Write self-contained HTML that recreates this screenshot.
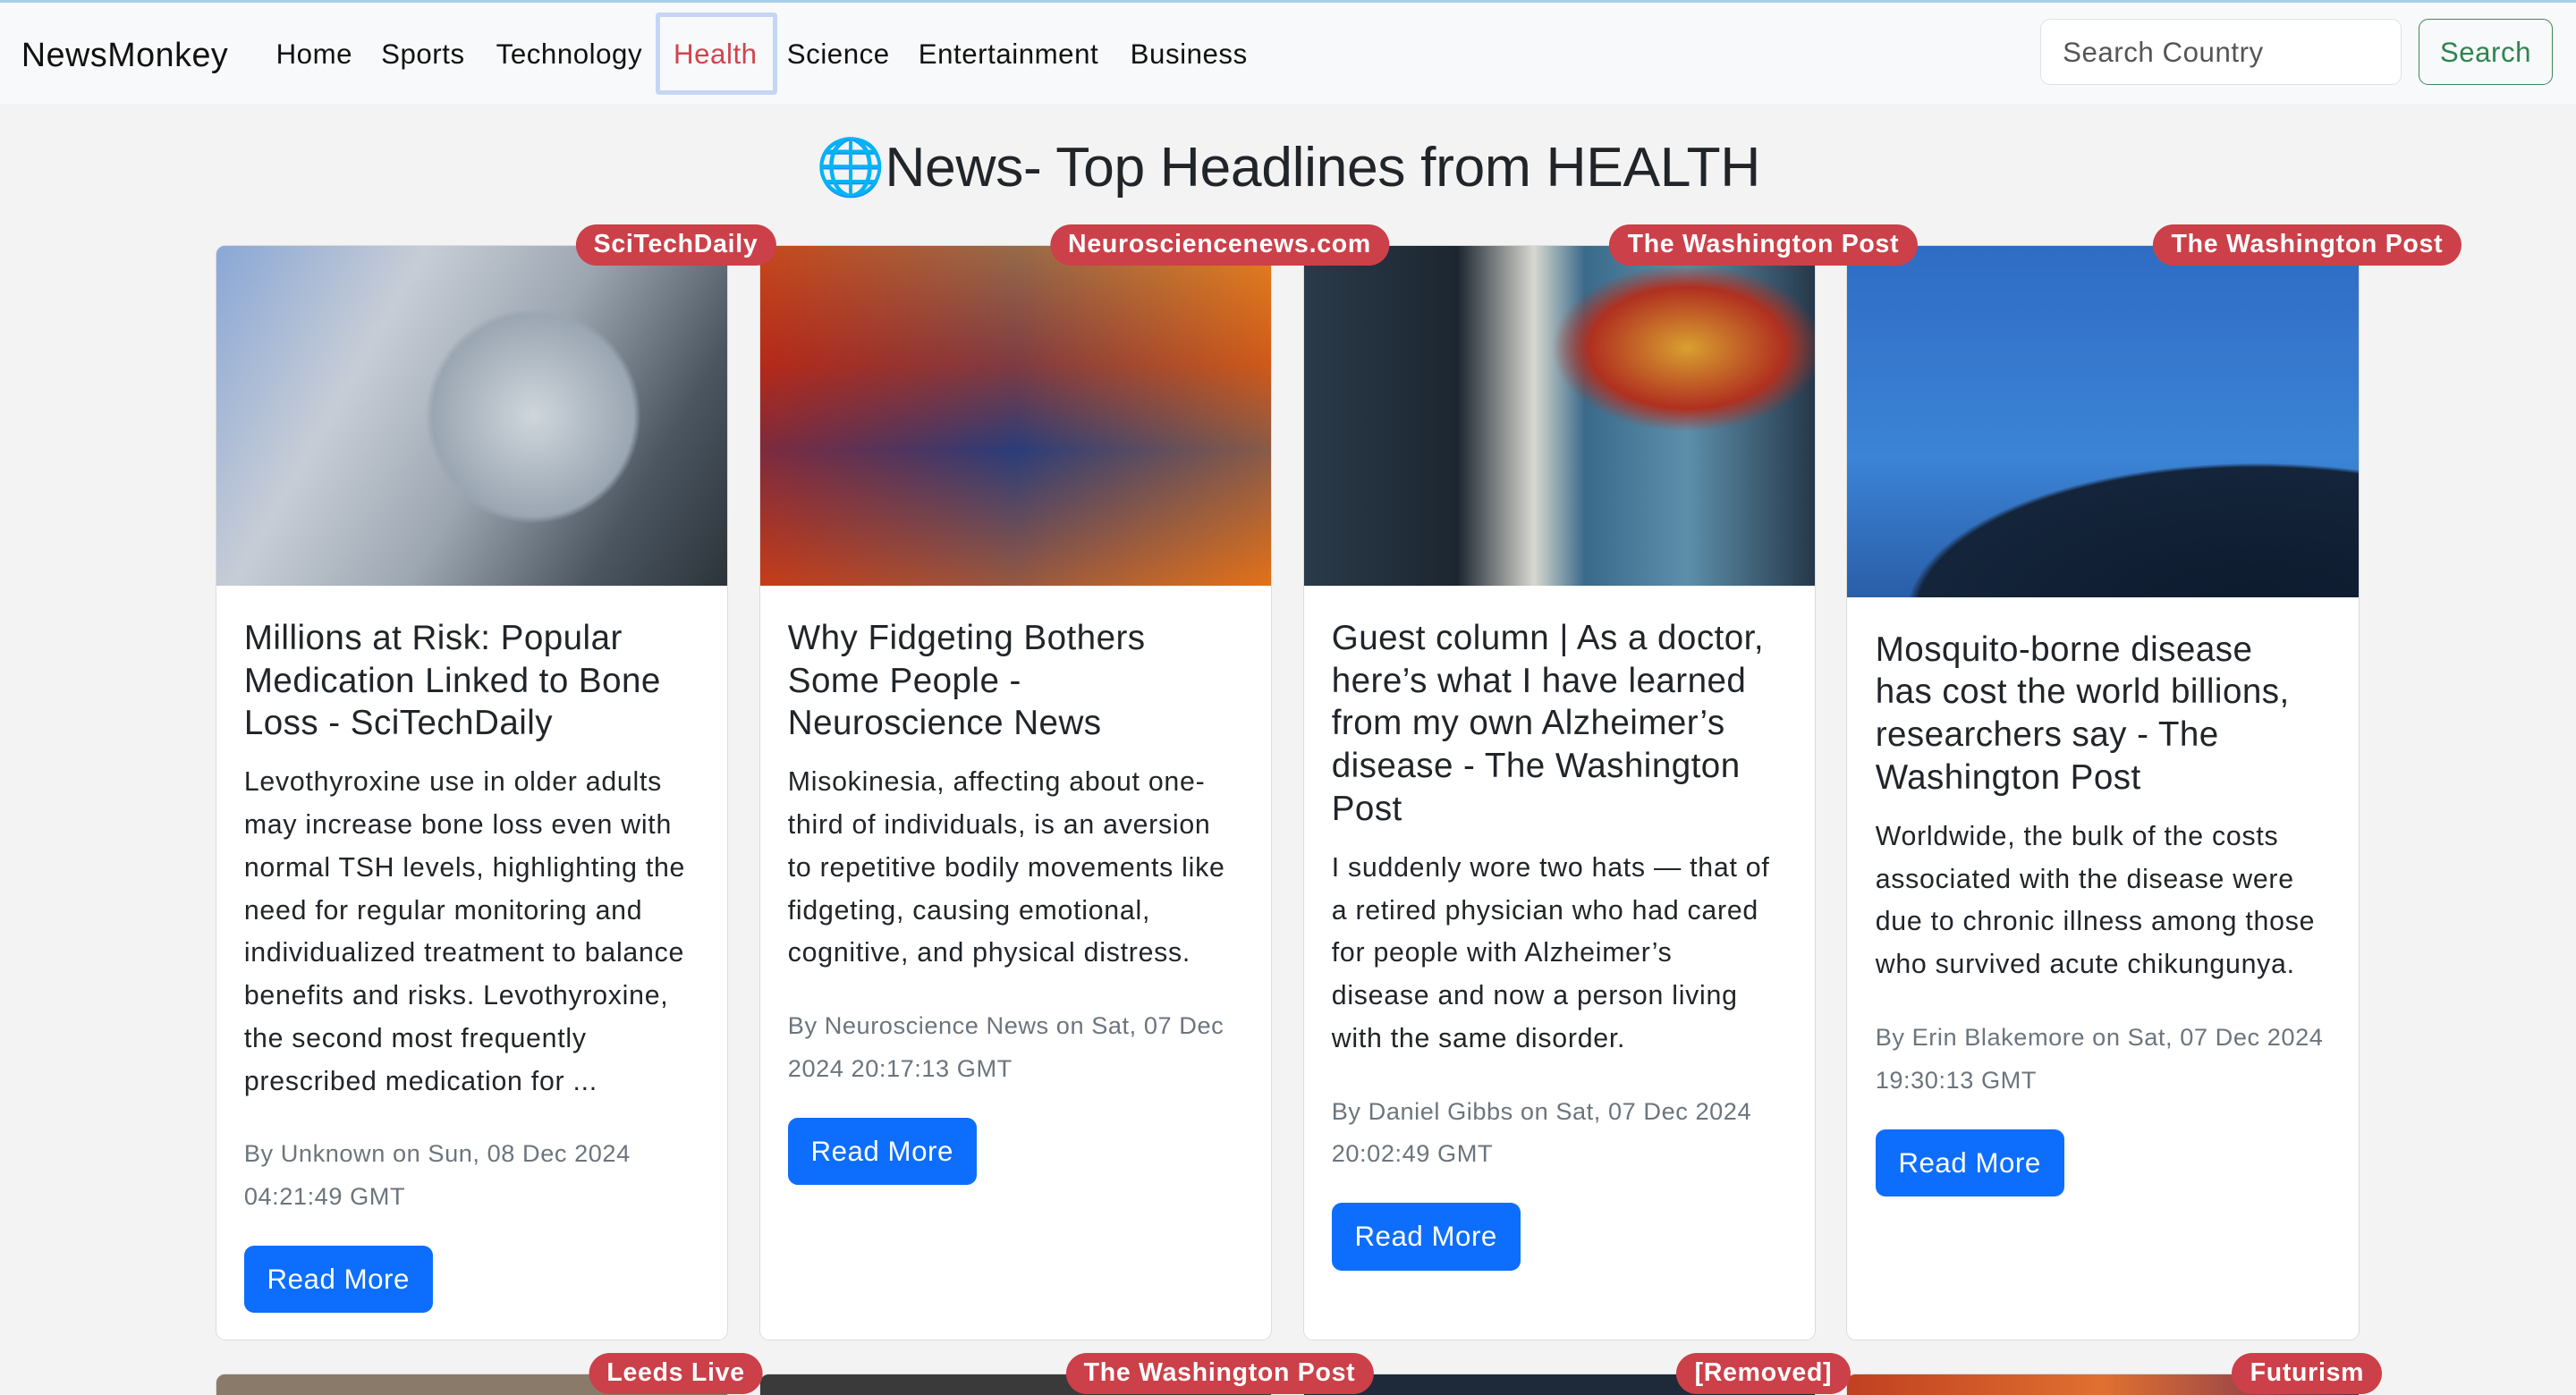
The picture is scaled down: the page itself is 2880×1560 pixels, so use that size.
<!DOCTYPE html>
<html><head><meta charset="utf-8">
<style>
html,body{margin:0;padding:0;}
html{background:#f3f3f3;overflow:hidden;width:2880px;height:1560px}
body{zoom:1.83673;width:1568px;height:849px;overflow:hidden;position:relative;font-family:"Liberation Sans",Helvetica,Arial,sans-serif;color:#212529;background:#f3f3f3}
.nav{position:absolute;left:0;top:0;width:1568px;height:63px;background:#f8f9fa;border-top:2px solid #a8cfe6;box-sizing:border-box}
.brand{position:absolute;left:13px;top:20px;font-size:20.5px;color:#111;letter-spacing:.3px}
.links{position:absolute;left:168px;top:22px;font-size:17px;color:#111;letter-spacing:.3px}
.links span{position:absolute;white-space:nowrap}
.hl{position:absolute;left:399px;top:6px;width:74px;height:50px;border:3px solid #c5d6f5;box-sizing:border-box;border-radius:2px}
.inp{position:absolute;left:1242px;top:10px;width:220px;height:40px;background:#fff;border:1px solid #dee2e6;border-radius:6px;box-sizing:border-box;font-size:17px;color:#555;padding:10px 13px;letter-spacing:.3px}
.btn{position:absolute;left:1472px;top:10px;width:82px;height:40px;border:1px solid #3a8a57;border-radius:6px;box-sizing:border-box;font-size:17px;color:#2f8450;text-align:center;line-height:40px;letter-spacing:.3px}
h1{position:absolute;left:0;width:1568px;text-align:center;top:82px;margin:0;font-size:34px;font-weight:500;color:#212529;line-height:40px;letter-spacing:-.2px}
.card{position:absolute;top:149px;width:312px;height:667px;background:#fff;border:1px solid #dcdcdc;border-radius:6px;box-sizing:border-box}
.img{height:207px;border-radius:5px 5px 0 0;overflow:hidden}
.badge{position:absolute;top:-13px;transform:translateX(-50%);background:#cc4049;color:#fff;font-weight:bold;font-size:15.5px;border-radius:14px;padding:4px 11px;white-space:nowrap;line-height:17px;z-index:3;letter-spacing:.4px}
.cb{padding:19px 24px 18px 17px}
.t{font-size:21px;line-height:26px;font-weight:500;margin:0 0 10px;color:#212529;letter-spacing:.25px}
.p{font-size:16.5px;line-height:26px;margin:0 0 18px;color:#212529;letter-spacing:.4px}
.m{font-size:14.8px;line-height:26px;color:#6c757d;margin:0 -8px 17px 0;letter-spacing:.3px}
.rb{display:inline-block;background:#0d6efd;color:#fff;font-size:17px;padding:0 14px;height:41px;line-height:41px;border-radius:6px;letter-spacing:.3px}
</style></head><body>
<div class="nav">
<div class="brand">NewsMonkey</div>
<div class="links">
<span style="left:0">Home</span><span style="left:64px">Sports</span><span style="left:134px">Technology</span><span style="left:242px;color:#d1434d">Health</span><span style="left:311px">Science</span><span style="left:391px">Entertainment</span><span style="left:520px">Business</span>
</div>
<div class="hl"></div>
<div class="inp">Search Country</div>
<div class="btn">Search</div>
</div>
<h1><span style="color:#4a8fd4">&#127760;</span>News- Top Headlines from HEALTH</h1>

<div class="card" style="left:131px">
<div class="badge" style="left:90%">SciTechDaily</div>
<div class="img" style="background:radial-gradient(circle at 62% 50%,#cfd6dc 0,#9aa6b2 28%,transparent 30%),linear-gradient(120deg,#8aa7d6 0%,#c7cdd6 30%,#9ca6b1 55%,#4b5661 80%,#2c333a 100%)"></div>
<div class="cb"><p class="t">Millions at Risk: Popular Medication Linked to Bone Loss - SciTechDaily</p>
<p class="p">Levothyroxine use in older adults may increase bone loss even with normal TSH levels, highlighting the need for regular monitoring and individualized treatment to balance benefits and risks. Levothyroxine, the second most frequently prescribed medication for ...</p>
<p class="m">By Unknown on Sun, 08 Dec 2024 04:21:49 GMT</p><span class="rb">Read More</span></div></div>

<div class="card" style="left:462px">
<div class="badge" style="left:90%">Neurosciencenews.com</div>
<div class="img" style="background:linear-gradient(90deg,rgba(180,30,20,.6),rgba(40,60,120,.4) 50%,rgba(230,120,20,.5)),linear-gradient(180deg,#e0892a 0%,#b83a1e 35%,#2c3d7a 60%,#e06a1c 100%)"></div>
<div class="cb"><p class="t">Why Fidgeting Bothers Some People - Neuroscience News</p>
<p class="p">Misokinesia, affecting about one-third of individuals, is an aversion to repetitive bodily movements like fidgeting, causing emotional, cognitive, and physical distress.</p>
<p class="m">By Neuroscience News on Sat, 07 Dec 2024 20:17:13 GMT</p><span class="rb">Read More</span></div></div>

<div class="card" style="left:793px">
<div class="badge" style="left:90%">The Washington Post</div>
<div class="img" style="background:radial-gradient(ellipse at 75% 30%,#d9a030 0,#b03020 18%,transparent 25%),linear-gradient(90deg,#2a3a4a 0%,#1c2630 30%,#d8d8d0 45%,#3a6a8a 55%,#5d8fab 75%,#26384a 100%)"></div>
<div class="cb"><p class="t">Guest column | As a doctor, here’s what I have learned from my own Alzheimer’s disease - The Washington Post</p>
<p class="p">I suddenly wore two hats — that of a retired physician who had cared for people with Alzheimer’s disease and now a person living with the same disorder.</p>
<p class="m">By Daniel Gibbs on Sat, 07 Dec 2024 20:02:49 GMT</p><span class="rb">Read More</span></div></div>

<div class="card" style="left:1124px">
<div class="badge" style="left:90%">The Washington Post</div>
<div class="img" style="height:214px;background:radial-gradient(ellipse 95% 60% at 80% 105%,#0d1a2e 0,#14243a 70%,transparent 72%),linear-gradient(180deg,#2f6cc4 0%,#3b84d6 60%,#2a5ea8 100%)"></div>
<div class="cb"><p class="t">Mosquito-borne disease has cost the world billions, researchers say - The Washington Post</p>
<p class="p">Worldwide, the bulk of the costs associated with the disease were due to chronic illness among those who survived acute chikungunya.</p>
<p class="m">By Erin Blakemore on Sat, 07 Dec 2024 19:30:13 GMT</p><span class="rb">Read More</span></div></div>

<div class="card" style="left:131px;top:836px;height:40px"><div class="badge" style="left:90%">Leeds Live</div><div class="img" style="background:#8a7a6a;height:40px"></div></div>
<div class="card" style="left:462px;top:836px;height:40px"><div class="badge" style="left:90%">The Washington Post</div><div class="img" style="background:#3a3a3a;height:40px"></div></div>
<div class="card" style="left:793px;top:836px;height:40px"><div class="badge" style="left:90%">[Removed]</div><div class="img" style="background:#1e2a3a;height:40px"></div></div>
<div class="card" style="left:1124px;top:836px;height:40px"><div class="badge" style="left:90%">Futurism</div><div class="img" style="background:linear-gradient(90deg,#c04020,#e07030,#6a2a5a);height:40px"></div></div>
</body></html>
